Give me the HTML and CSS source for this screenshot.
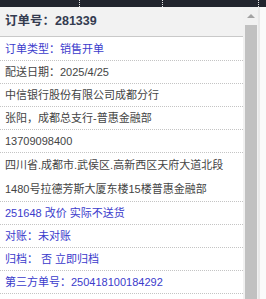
FILE: index.html
```html
<!DOCTYPE html>
<html lang="zh-CN">
  <head>
    <meta charset="UTF-8" />
    <meta name="viewport" content="width=device-width, initial-scale=1.0" />
    <title>订单详情</title>
    <link rel="stylesheet" href="styles.css">
  </head>

  <body>
    <div class="topbar">
      <span class="seg seg-a"></span>
      <span class="seg seg-b"></span>
      <span class="seg seg-c"></span>
    </div>

    <div class="main">
      <div class="panel">
        <div class="header">订单号：281339</div>
        <ul class="rows">
          <li class="row blue first">订单类型：销售开单</li>
          <li class="row">配送日期：2025/4/25</li>
          <li class="row">中信银行股份有限公司成都分行</li>
          <li class="row">张阳，成都总支行-普惠金融部</li>
          <li class="row">13709098400</li>
          <li class="row address">四川省.成都市.武侯区.高新西区天府大道北段<br />1480号拉德芳斯大厦东楼15楼普惠金融部</li>
          <li class="row blue">251648 改价 实际不送货</li>
          <li class="row blue">对账：未对账</li>
          <li class="row blue">归档： 否 立即归档</li>
          <li class="row blue">第三方单号：250418100184292</li>
        </ul>
      </div>

      <div class="scrollbar">
        <div class="arrow"></div>
        <div class="thumb"></div>
      </div>

      <div class="edge"></div>
    </div>
  </body>
</html>
```

FILE: styles.css
```css
body {
  margin: 0;
  padding: 0;
  font-family: "Liberation Sans", "Noto Sans CJK SC", sans-serif;
  background-color: #fff;
  overflow: hidden;
}

.topbar {
  display: flex;
  height: 7px;
  background-color: #22252e;
}

.seg {
  border-right: 1px dotted #e6e6e6;
}

.seg-a {
  width: 79px;
}

.seg-b {
  width: 82px;
}

.seg-c {
  width: 95px;
}

.main {
  display: flex;
  height: 292px;
}

.panel {
  flex: 1;
  overflow: hidden;
}

.header {
  height: 29px;
  line-height: 29px;
  padding-left: 5px;
  background-color: #f2f2f2;
  border-bottom: 1px solid #c9c9c9;
  font-size: 12.5px;
  font-weight: bold;
  color: #343b50;
}

.rows {
  list-style: none;
  margin: 0;
  padding: 0;
}

.row {
  padding: 0 5px;
  line-height: 22px;
  font-size: 11px;
  color: #444;
  border-bottom: 1px dotted #c4c4c4;
  white-space: nowrap;
}

.row.first {
  padding-top: 1px;
}

.row.address {
  line-height: 24px;
}

.blue {
  color: #3b3bcc;
}

.scrollbar {
  width: 15px;
  background-color: #f1f1f1;
  display: flex;
  flex-direction: column;
  align-items: center;
}

.arrow {
  margin-top: 7px;
  width: 0;
  height: 0;
  border-left: 4px solid transparent;
  border-right: 4px solid transparent;
  border-bottom: 4px solid #a3a3a3;
}

.thumb {
  margin-top: 7px;
  width: 12px;
  flex: 1;
  background-color: #c1c1c1;
}

.edge {
  width: 8px;
  background-color: #fafafa;
  border-left: 2px solid #e8e8e8;
  box-sizing: border-box;
}
```
